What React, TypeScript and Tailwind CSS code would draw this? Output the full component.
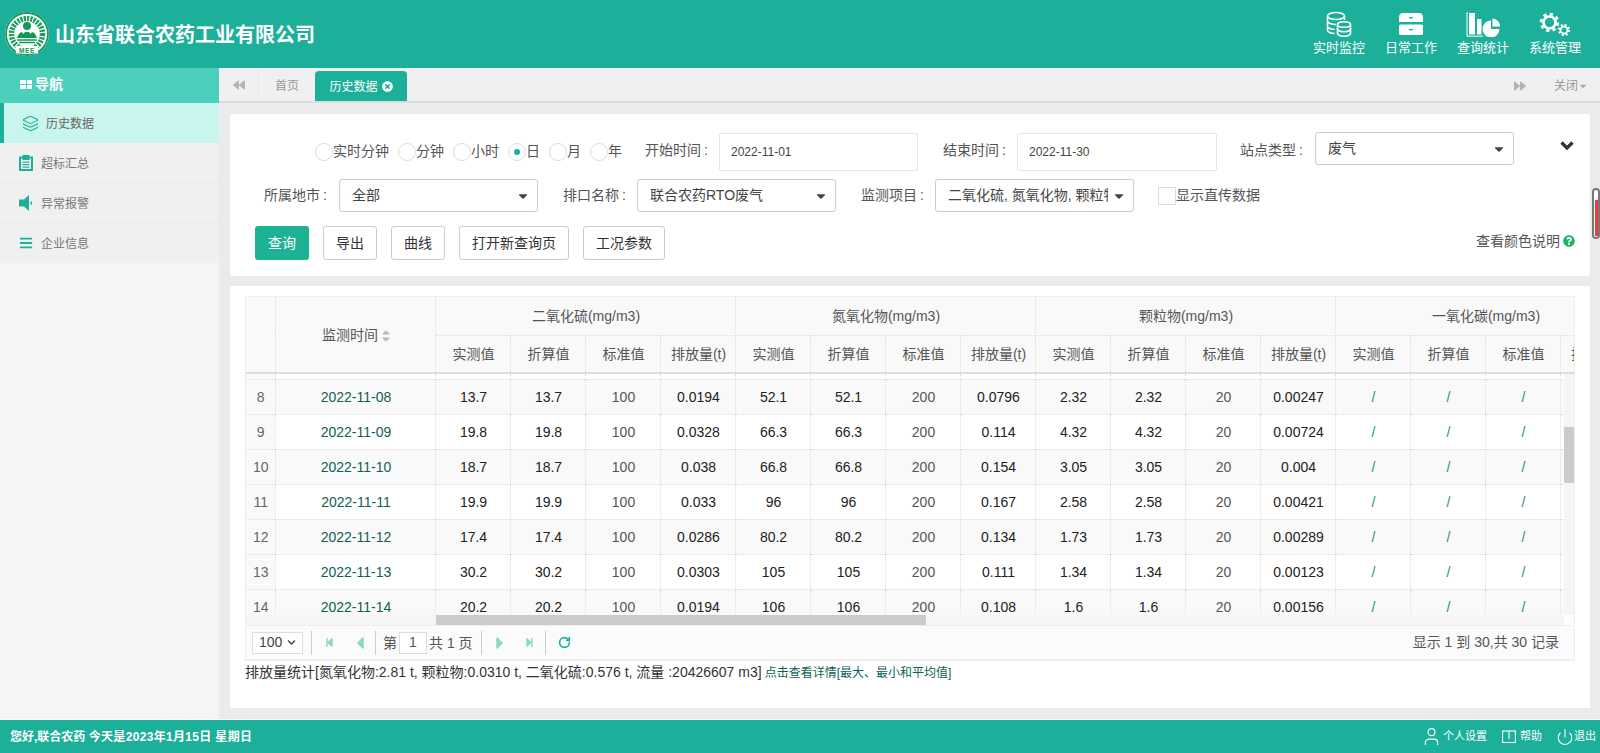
import { Layers, User, Power, RotateCw } from 'lucide-react'
import {
  FaBackward,
  FaForward,
  FaStepBackward,
  FaStepForward,
  FaCaretLeft,
  FaCaretRight,
  FaCaretDown,
  FaChevronDown,
  FaQuestionCircle,
  FaTimesCircle,
  FaBars,
} from 'react-icons/fa'

const rows = [
  ['8', '2022-11-08', '13.7', '13.7', '100', '0.0194', '52.1', '52.1', '200', '0.0796', '2.32', '2.32', '20', '0.00247'],
  ['9', '2022-11-09', '19.8', '19.8', '100', '0.0328', '66.3', '66.3', '200', '0.114', '4.32', '4.32', '20', '0.00724'],
  ['10', '2022-11-10', '18.7', '18.7', '100', '0.038', '66.8', '66.8', '200', '0.154', '3.05', '3.05', '20', '0.004'],
  ['11', '2022-11-11', '19.9', '19.9', '100', '0.033', '96', '96', '200', '0.167', '2.58', '2.58', '20', '0.00421'],
  ['12', '2022-11-12', '17.4', '17.4', '100', '0.0286', '80.2', '80.2', '200', '0.134', '1.73', '1.73', '20', '0.00289'],
  ['13', '2022-11-13', '30.2', '30.2', '100', '0.0303', '105', '105', '200', '0.111', '1.34', '1.34', '20', '0.00123'],
  ['14', '2022-11-14', '20.2', '20.2', '100', '0.0194', '106', '106', '200', '0.108', '1.6', '1.6', '20', '0.00156'],
]

const groups = ['二氧化硫(mg/m3)', '氮氧化物(mg/m3)', '颗粒物(mg/m3)', '一氧化碳(mg/m3)']
const subHeads = ['实测值', '折算值', '标准值', '排放量(t)']
const standardCols = [4, 8, 12]

function Logo() {
  return (
    <svg viewBox="0 0 44 44" className="w-[44px] h-[44px] shrink-0">
      <circle cx="22" cy="22" r="22" fill="#fff" />
      <circle cx="22" cy="22" r="21" fill="none" stroke="#169a5c" strokeWidth="1.8" />
      <circle cx="22" cy="22" r="15.500" fill="none" stroke="#1d9f5f" strokeWidth="5.500" strokeDasharray="2.200 1.100" />
      <rect x="11" y="34" width="22" height="7.500" fill="#fff" />
      <circle cx="22" cy="21" r="11" fill="#fff" />
      <circle cx="22" cy="14" r="4" fill="#109a55" />
      <path d="M12 26c2-6 5-7 6.500-4 1-3 6-3 7 0 1.500-3 4.500-2 6.500 4z" fill="#109a55" />
      <path d="M12 28h20M14 30.500h16" stroke="#109a55" strokeWidth="1.400" />
      <text x="22" y="40.500" textAnchor="middle" fontSize="6.500" fontWeight="700" fill="#109a55" letterSpacing="0.6">
        MEE
      </text>
    </svg>
  )
}

function DbIcon() {
  return (
    <svg viewBox="0 0 26 26" className="w-[26px] h-[26px]" fill="none" stroke="#fff" strokeWidth="1.6">
      <ellipse cx="10" cy="5" rx="8.500" ry="3.500" />
      <path d="M1.500 5v14c0 2 3.500 3.500 7 3.500M18.500 5v4M1.500 10c0 2 4 3.500 8.500 3.500M1.500 15c0 2 3.500 3.500 7 3.500" />
      <ellipse cx="18" cy="13.500" rx="6.500" ry="2.800" />
      <path d="M11.500 13.500v9c0 1.500 3 2.800 6.500 2.800s6.500-1.300 6.500-2.800v-9M11.500 18c0 1.500 3 2.800 6.500 2.800s6.500-1.300 6.500-2.800" />
    </svg>
  )
}

function DrawerIcon() {
  return (
    <svg viewBox="0 0 26 24" className="w-[26px] h-[24px]">
      <path d="M1 10V5.500Q1 1 5 1h16q4 0 4 4.500V10z" fill="#fff" />
      <rect x="1" y="12.500" width="24" height="10.500" rx="1.500" fill="#fff" />
      <rect x="11" y="5" width="4" height="1.300" fill="#1cb09a" />
      <rect x="11" y="17" width="4" height="1.300" fill="#1cb09a" />
    </svg>
  )
}

function ChartIcon() {
  return (
    <svg viewBox="0 0 34 25" className="w-[34px] h-[25px]" fill="#fff">
      <path d="M1 0v24.200h16" fill="none" stroke="#fff" strokeWidth="1" />
      <rect x="3" y="1" width="6" height="21.500" />
      <rect x="11" y="7" width="4.500" height="15.500" />
      <path d="M24 8.500a8.500 8.500 0 1 0 8.500 8.500H24z" transform="translate(1 0)" />
      <path d="M26.500 6.500a8 8 0 0 1 7.500 8h-7.500z" />
    </svg>
  )
}

function Gear({ cx, cy, r, w }: { cx: number; cy: number; r: number; w: number }) {
  const c = 2 * Math.PI * (r + w * 0.9)
  return (
    <g fill="none" stroke="#fff">
      <circle cx={cx} cy={cy} r={r + w * 0.9} strokeWidth={w * 1.1} strokeDasharray={`${c / 16} ${c / 16}`} />
      <circle cx={cx} cy={cy} r={r} strokeWidth={w} />
    </g>
  )
}

function GearsIcon() {
  return (
    <svg viewBox="0 0 32 25" className="w-[32px] h-[25px]">
      <Gear cx={10.500} cy={10.500} r={6} w={2.600} />
      <Gear cx={25} cy={18} r={3.500} w={1.800} />
    </svg>
  )
}

function ClipboardIcon() {
  return (
    <svg viewBox="0 0 14 16" className="w-[14px] h-[16px]" fill="#1cb09a">
      <path d="M0 1.500h3.500V0h7v1.500H14V16H0zM2 3.500v10.500h10V3.500h-1.500V5h-7V3.500z" />
      <rect x="3.500" y="6.500" width="7" height="1.200" />
      <rect x="3.500" y="9" width="7" height="1.200" />
      <rect x="3.500" y="11.500" width="7" height="1.200" />
    </svg>
  )
}

function SpeakerIcon() {
  return (
    <svg viewBox="0 0 14 16" className="w-[14px] h-[16px]" fill="#1cb09a">
      <path d="M0 4.500h5L10 0v16L5 11.500H0z" />
      <path d="M12 6.500q1.500 1.500 0 3z" fill="none" stroke="#1cb09a" />
    </svg>
  )
}

function BookIcon() {
  return (
    <svg viewBox="0 0 14 14" className="w-[14px] h-[14px]" fill="none" stroke="#fff" strokeWidth="1.100">
      <rect x="0.600" y="1" width="12.800" height="11.500" />
      <path d="M7 1v8" />
    </svg>
  )
}

function Radio({ label, checked, first }: { label: string; checked?: boolean; first?: boolean }) {
  return (
    <div className={first ? 'flex items-center' : 'flex items-center ml-[9px]'}>
      <span className="w-[18px] h-[18px] rounded-full border border-[#dcdcdc] bg-white flex items-center justify-center mt-[2px]">
        {checked && <span className="w-[6px] h-[6px] rounded-full bg-[#1cb09a]" />}
      </span>
      <span className="text-[14px] text-[#555] leading-[18px]">{label}</span>
    </div>
  )
}

function Select({ value, clip }: { value: string; clip?: boolean }) {
  return (
    <div className="w-[199px] h-[33px] border border-[#ccc] rounded-[3px] bg-white flex items-center pl-[12px] pr-[7px] justify-between shrink-0">
      <span className={clip ? 'text-[14px] text-[#444] w-[160px] overflow-hidden whitespace-nowrap' : 'text-[14px] text-[#444] whitespace-nowrap'}>
        {value}
      </span>
      <FaCaretDown className="text-[#444] w-[14px] h-[14px]" />
    </div>
  )
}

function Btn({ children, primary }: { children: string; primary?: boolean }) {
  return (
    <button
      className={
        primary
          ? 'h-[34px] px-[13px] rounded-[3px] bg-[#1cb394] text-white text-[14px]'
          : 'h-[34px] px-[12px] rounded-[3px] bg-white border border-[#ccc] text-[#333] text-[14px]'
      }
    >
      {children}
    </button>
  )
}

function Label({ text, className }: { text: string; className: string }) {
  return (
    <span className={'text-[14px] text-[#555] ' + className}>
      {text}
      <span className="ml-[3px]">:</span>
    </span>
  )
}

function Cols() {
  return (
    <colgroup>
      <col className="w-[30px]" />
      <col className="w-[160px]" />
      {Array.from({ length: 16 }).map((_, i) => (
        <col key={i} className="w-[75px]" />
      ))}
    </colgroup>
  )
}

function ToolSep() {
  return <span className="w-px h-[24px] bg-[#ccc] shrink-0" />
}

export default function App() {
  return (
    <div className="w-full h-screen flex flex-col overflow-hidden relative bg-[#ebebed] text-[#333] [font-family:'Liberation_Sans','Noto_Sans_CJK_SC',sans-serif]">
      {/* top bar */}
      <header className="h-[68px] shrink-0 bg-[#1cb09a] flex items-center justify-between pl-[5px] pr-[19px]">
        <div className="flex items-center gap-[6px] -mt-[1px]">
          <Logo />
          <span className="text-[20px] font-bold text-white leading-none mt-[3px]">山东省联合农药工业有限公司</span>
        </div>
        <nav className="flex gap-[20px] text-white text-[13px]">
          {[
            ['实时监控', <DbIcon key="a" />],
            ['日常工作', <DrawerIcon key="b" />],
            ['查询统计', <ChartIcon key="c" />],
            ['系统管理', <GearsIcon key="d" />],
          ].map(([label, icon], i) => (
            <div key={i} className="flex flex-col items-center w-[52px]">
              <div className="h-[26px] flex items-center">{icon}</div>
              <span className="mt-[2px] leading-[18px] whitespace-nowrap">{label}</span>
            </div>
          ))}
        </nav>
      </header>

      <div className="flex-1 flex min-h-0">
        {/* side menu */}
        <aside className="w-[219px] shrink-0 bg-[#f5f5f5] flex flex-col">
          <div className="h-[35px] bg-[#4ccfbb] flex items-center pl-[20px] pb-[2px] gap-[3px] text-white text-[14px] font-bold">
            <span className="grid grid-cols-2 gap-[1px] w-[12px]">
              <span className="h-[4px] bg-white" />
              <span className="h-[4px] bg-white" />
              <span className="h-[4px] bg-white" />
              <span className="h-[4px] bg-white" />
            </span>
            导航
          </div>
          <div className="h-[40px] bg-[#c8f5ed] border-l-[4px] border-[#1cb09a] flex items-center pl-[18px] gap-[7px] text-[12px] text-[#666]">
            <Layers className="w-[17px] h-[17px] text-[#1cb09a]" strokeWidth={1.5} />
            <span className="mt-[2px]">历史数据</span>
          </div>
          <div className="h-[40px] bg-[#f0f0f0] border-b border-[#e8e8e8] flex items-center pl-[19px] gap-[8px] text-[12px] text-[#777]">
            <ClipboardIcon />
            <span className="mt-[2px]">超标汇总</span>
          </div>
          <div className="h-[40px] bg-[#f0f0f0] border-b border-[#e8e8e8] flex items-center pl-[19px] gap-[8px] text-[12px] text-[#777]">
            <SpeakerIcon />
            <span className="mt-[2px]">异常报警</span>
          </div>
          <div className="h-[40px] bg-[#f0f0f0] flex items-center pl-[19px] gap-[8px] text-[12px] text-[#777]">
            <FaBars className="w-[14px] h-[14px] text-[#1cb09a]" />
            <span className="mt-[2px]">企业信息</span>
          </div>
        </aside>

        <main className="flex-1 min-w-0 flex flex-col">
          {/* tabs */}
          <div className="h-[35px] shrink-0 bg-[#f0f0f0] border-b-[2px] border-[#dcdcdc] flex items-end text-[12px] text-[#999]">
            <div className="w-[40px] h-[33px] border-r border-[#e8e8e8] flex items-center justify-center">
              <FaBackward className="w-[12px] h-[12px] text-[#b5b5b5]" />
            </div>
            <div className="w-[56px] h-[33px] pt-[2px] flex items-center justify-center">首页</div>
            <div className="w-[92px] h-[30px] bg-[#1cb09a] rounded-t-[4px] text-white flex items-center justify-center gap-[4px]">
              <span className="mt-[1px]">历史数据</span>
              <FaTimesCircle className="w-[11px] h-[11px] text-white" />
            </div>
            <div className="flex-1" />
            <div className="h-[33px] pt-[2px] flex items-center pr-[12px]">
              <FaForward className="w-[12px] h-[12px] text-[#b5b5b5] mr-[28px]" />
              <span>关闭</span>
              <FaCaretDown className="w-[10px] h-[10px] text-[#aaa]" />
            </div>
          </div>

          <div className="flex-1 min-h-0 flex flex-col pt-[11px] pl-[11px] pr-[10px]">
            {/* query form */}
            <section className="h-[162px] shrink-0 bg-white rounded-[3px] flex flex-col pt-[18px]">
              <div className="flex items-start h-[47px] pl-[85px]">
                <div className="flex items-center h-[38px]">
                  <Radio label="实时分钟" first />
                  <Radio label="分钟" />
                  <Radio label="小时" />
                  <Radio label="日" checked />
                  <Radio label="月" />
                  <Radio label="年" />
                </div>
                <Label text="开始时间" className="ml-[23px] w-[74px] leading-[36px]" />
                <div className="w-[199px] h-[38px] mt-[1px] border border-[#e5e5e5] rounded-[2px] pl-[11px] flex items-center text-[12px] text-[#444]">2022-11-01</div>
                <Label text="结束时间" className="ml-[25px] w-[74px] leading-[36px]" />
                <div className="w-[200px] h-[38px] mt-[1px] border border-[#e5e5e5] rounded-[2px] pl-[11px] flex items-center text-[12px] text-[#444]">2022-11-30</div>
                <Label text="站点类型" className="ml-[23px] w-[75px] leading-[36px]" />
                <Select value="废气" />
                <svg viewBox="0 0 14 10" className="w-[14px] h-[10px] ml-[46px] mt-[9px]" fill="none" stroke="#333" strokeWidth="3.200">
                  <path d="M1.500 1.500L7 7l5.500-5.500" />
                </svg>
              </div>
              <div className="flex items-center h-[33px] pl-[34px]">
                <Label text="所属地市" className="w-[75px]" />
                <Select value="全部" />
                <Label text="排口名称" className="ml-[25px] w-[74px]" />
                <Select value="联合农药RTO废气" />
                <Label text="监测项目" className="ml-[25px] w-[74px]" />
                <Select value="二氧化硫, 氮氧化物, 颗粒物" clip />
                <span className="ml-[24px] w-[18px] h-[18px] border border-[#dcdcdc]" />
                <span className="text-[14px] text-[#555]">显示直传数据</span>
              </div>
              <div className="flex items-center gap-[14px] mt-[14px] pl-[25px] pr-[15px]">
                <Btn primary>查询</Btn>
                <Btn>导出</Btn>
                <Btn>曲线</Btn>
                <Btn>打开新查询页</Btn>
                <Btn>工况参数</Btn>
                <div className="ml-auto flex items-center gap-[3px] text-[14px] text-[#555] mt-[-4px]">
                  查看颜色说明
                  <FaQuestionCircle className="w-[12px] h-[12px] text-[#1cb36a]" />
                </div>
              </div>
            </section>

            {/* data table */}
            <section className="mt-[10px] flex-1 min-h-0 mb-[11px] bg-white px-[15px] pt-[10px]">
              <div className="w-[1330px] overflow-hidden border-t border-l border-r border-[#eee]">
                <table className="table-fixed w-[1390px] -ml-px text-[14px] text-[#555] text-center bg-[#f9f9f9]">
                  <Cols />
                  <thead className="font-normal">
                    <tr className="h-[38px]">
                      <th rowSpan={2} className="font-normal border-r border-dotted border-[#ddd]" />
                      <th rowSpan={2} className="font-normal pl-[2px] pt-[2px] border-r border-dotted border-[#ddd]">
                        <span className="inline-flex items-center gap-[4px]">
                          监测时间
                          <span className="flex flex-col text-[#bbb] -space-y-[8px]">
                            <FaCaretDown className="w-[8px] h-[14px] rotate-180" />
                            <FaCaretDown className="w-[8px] h-[14px]" />
                          </span>
                        </span>
                      </th>
                      {groups.map((g) => (
                        <th key={g} colSpan={4} className="font-normal pl-[2px] pt-[2px] border-r border-b border-dotted border-[#ddd]">
                          {g}
                        </th>
                      ))}
                    </tr>
                    <tr className="h-[37px]">
                      {groups.flatMap((g) =>
                        subHeads.map((s) => (
                          <th key={g + s} className="font-normal pl-[2px] pt-[2px] border-r border-dotted border-[#ddd] whitespace-nowrap">
                            {s}
                          </th>
                        )),
                      )}
                    </tr>
                  </thead>
                </table>
              </div>
              <div className="w-[1330px] h-[253px] overflow-hidden border-t-[2px] border-l border-r border-t-[#ddd] border-l-[#eee] border-r-[#eee] relative">
                <div className="flex h-[241px]">
                  <div className="w-[1318px] overflow-hidden">
                    <table className="table-fixed w-[1390px] -ml-px text-[14px] text-center">
                      <Cols />
                      <tbody>
                        <tr className="h-[5px]">
                          {Array.from({ length: 18 }).map((_, i) => (
                            <td key={i} className={i === 0 ? 'p-0 bg-[#f9f9f9] border-r border-dotted border-[#ddd]' : 'p-0 border-r border-dotted border-[#ddd]'} />
                          ))}
                        </tr>
                        {rows.map((r, ri) => (
                          <tr key={r[0]} className={ri % 2 === 0 ? 'h-[35px] bg-[#f9f9f9]' : 'h-[35px] bg-white'}>
                            {r.map((v, i) => (
                              <td
                                key={i}
                                className={
                                  'p-0 pl-[2px] pt-[2px] border-r border-t border-dotted border-[#ddd] ' +
                                  (i === 0
                                    ? 'bg-[#f9f9f9] text-[#666]'
                                    : i === 1
                                      ? 'text-[#0f5f57]'
                                      : standardCols.includes(i)
                                        ? 'text-[#555]'
                                        : 'text-[#222]')
                                }
                              >
                                {v}
                              </td>
                            ))}
                            {['/', '/', '/', ''].map((v, i) => (
                              <td key={'x' + i} className="p-0 pl-[2px] pt-[2px] border-r border-t border-dotted border-[#ddd] text-[#2a8f86]">
                                {v}
                              </td>
                            ))}
                          </tr>
                        ))}
                      </tbody>
                    </table>
                  </div>
                  {/* vertical scrollbar */}
                  <div className="w-[10px] bg-[#f5f5f5] pt-[53px]">
                    <div className="h-[56px] bg-[#cbcbcc]" />
                  </div>
                </div>
                {/* horizontal scrollbar */}
                <div className="h-[10px] w-[1318px] bg-[#f5f5f5] pl-[190px]">
                  <div className="h-[10px] w-[490px] bg-[#cbcbcc]" />
                </div>
              </div>
              {/* pager */}
              <div className="w-[1330px] h-[36px] bg-[#fbfbfb] border border-[#eee] border-b-[2px] rounded-t-[3px] flex items-center pl-[6px] pr-[15px] text-[14px] text-[#555]">
                <div className="w-[51px] h-[22px] border border-[#ddd] bg-white flex items-center justify-between px-[6px] text-[#444]">
                  100
                  <FaChevronDown className="w-[9px] h-[9px] text-[#444]" />
                </div>
                <span className="w-[8px]" />
                <ToolSep />
                <FaStepBackward className="w-[9px] h-[11px] ml-[13px] text-[#8dd8cb]" />
                <FaCaretLeft className="w-[8px] h-[20px] ml-[22px] text-[#8dd8cb]" />
                <span className="w-[11px]" />
                <ToolSep />
                <span className="ml-[7px] mt-[1px]">第</span>
                <span className="w-[28px] h-[22px] ml-[2px] border border-[#ddd] bg-white flex items-center justify-center">1</span>
                <span className="ml-[2px] mt-[1px] whitespace-nowrap">共 1 页</span>
                <span className="w-[8px]" />
                <ToolSep />
                <FaCaretRight className="w-[8px] h-[20px] ml-[14px] text-[#8dd8cb]" />
                <FaStepForward className="w-[9px] h-[11px] ml-[21px] text-[#8dd8cb]" />
                <span className="w-[11px]" />
                <ToolSep />
                <RotateCw className="w-[13px] h-[13px] ml-[12px] text-[#1cb09a]" strokeWidth={3} />
                <span className="ml-auto">显示 1 到 30,共 30 记录</span>
              </div>
              <div className="mt-[1px] flex items-baseline whitespace-nowrap text-[14px] text-[#333] leading-[20px]">
                排放量统计[氮氧化物:2.81 t, 颗粒物:0.0310 t, 二氧化硫:0.576 t, 流量 :20426607 m3]
                <span className="ml-[3px] text-[12px] text-[#0f5f57]">点击查看详情[最大、最小和平均值]</span>
              </div>
            </section>
          </div>
        </main>
      </div>

      {/* bottom bar */}
      <footer className="h-[34px] shrink-0 border-t border-white bg-[#1cb09a] flex items-center justify-between pl-[10px] pr-[4px] text-white">
        <span className="text-[12px] font-bold">
          您好,联合农药 <span className="tracking-[0.33px]">今天是2023年1月15日 星期日</span>
        </span>
        <div className="flex items-center text-[11px] text-white">
          <User className="w-[21px] h-[21px]" strokeWidth={1.3} />
          <span className="ml-[1px] mr-[1px]">个人设置</span>
          <span className="ml-[14px]">
            <BookIcon />
          </span>
          <span className="ml-[4px]">帮助</span>
          <Power className="w-[18px] h-[18px] ml-[14px]" strokeWidth={1.4} />
          <span>退出</span>
        </div>
      </footer>

      {/* slim page scrollbar */}
      <div className="absolute right-[0px] top-[188px] w-[8px] h-[51px] rounded-full border-[2px] border-[#777] bg-white flex justify-center pt-[10px] pb-[1px]">
        <span className="w-[3px] bg-[#ef3b3b]" />
      </div>
    </div>
  )
}
